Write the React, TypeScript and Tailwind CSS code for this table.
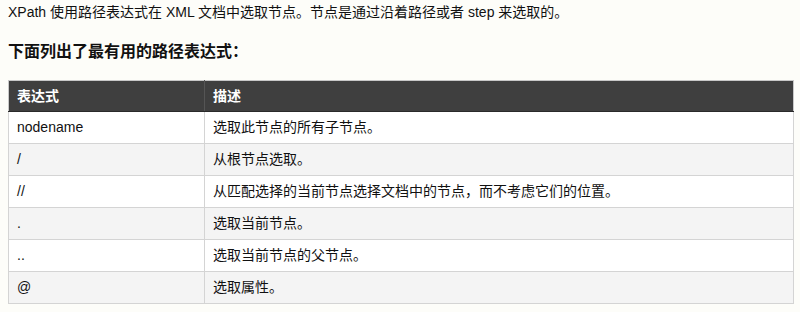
import React from "react";

const rows: [string, string][] = [
  ["nodename", "选取此节点的所有子节点。"],
  ["/", "从根节点选取。"],
  ["//", "从匹配选择的当前节点选择文档中的节点，而不考虑它们的位置。"],
  [".", "选取当前节点。"],
  ["..", "选取当前节点的父节点。"],
  ["@", "选取属性。"],
];

export default function App() {
  return (
    <div
      className="w-[800px] h-[312px] bg-[#fdfdf9] text-[#111] px-2 overflow-hidden"
      style={{ fontFamily: '"Liberation Sans", "Noto Sans CJK SC", sans-serif' }}
    >
      <p className="text-[14px] leading-[24px] pt-0">
        XPath 使用路径表达式在 XML 文档中选取节点。节点是通过沿着路径或者 step 来选取的。
      </p>
      <h2 className="text-[16px] font-bold leading-[24px] mt-[16px]">下面列出了最有用的路径表达式：</h2>
      <table className="mt-[16px] w-[786px] border-collapse border border-[#c8c8c8] text-[14px]">
        <thead>
          <tr className="bg-[#3f3f3f] text-white">
            <th className="w-[196px] h-[31px] text-left font-bold px-2 border-r border-[#555] border-b border-b-[#2a2a2a]">表达式</th>
            <th className="text-left font-bold px-2 border-b border-b-[#2a2a2a]">描述</th>
          </tr>
        </thead>
        <tbody>
          {rows.map(([a, b], i) => (
            <tr key={i} className={i % 2 === 0 ? "bg-white" : "bg-[#f4f4f4]"}>
              <td className="h-[32px] px-2 border border-[#d4d4d4]">{a}</td>
              <td className="px-2 border border-[#d4d4d4]">{b}</td>
            </tr>
          ))}
        </tbody>
      </table>
    </div>
  );
}
